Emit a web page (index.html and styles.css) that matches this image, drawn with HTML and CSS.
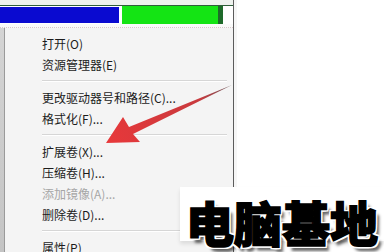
FILE: index.html
```html
<!DOCTYPE html>
<html>
<head>
<meta charset="utf-8">
<link rel="stylesheet" href="styles.css">
</head>
<body>
<div class="screen">
  <div class="disk">
    <div class="band"></div>
    <div class="bars">
      <div class="bar blue"></div>
      <div class="bar green"></div>
    </div>
    <div class="under"></div>
    <div class="body">
      <div class="strip"></div>
      <div class="menu">
        <div class="item">打开(O)</div>
        <div class="item">资源管理器(E)</div>
        <div class="sep"></div>
        <div class="item">更改驱动器号和路径(C)...</div>
        <div class="item">格式化(F)...</div>
        <div class="sep"></div>
        <div class="item">扩展卷(X)...</div>
        <div class="item">压缩卷(H)...</div>
        <div class="item disabled">添加镜像(A)...</div>
        <div class="item">删除卷(D)...</div>
        <div class="sep"></div>
        <div class="item">属性(P)</div>
      </div>
    </div>
  </div>
  <div class="divider"></div>
  <div class="blank"></div>
</div>
<svg class="arrow" width="384" height="252" viewBox="0 0 384 252">
  <defs>
    <linearGradient id="ag" x1="232" y1="86" x2="106" y2="143" gradientUnits="userSpaceOnUse">
      <stop offset="0" stop-color="#6a5a5e"/>
      <stop offset="0.25" stop-color="#c83a3e"/>
      <stop offset="1" stop-color="#e8383a"/>
    </linearGradient>
  </defs>
  <polygon points="106,143 123,117 129,127 232,85 133,134 140,142" fill="url(#ag)"/>
</svg>
<div class="mark">电脑基地</div>
</body>
</html>
```
FILE: styles.css
```css
html, body {
  margin: 0;
  padding: 0;
}
body {
  width: 384px;
  height: 252px;
  overflow: hidden;
  position: relative;
  background: #fff;
  font-family: "Noto Sans CJK SC", "Noto Sans", sans-serif;
}
.screen {
  display: flex;
  height: 252px;
}
.disk {
  width: 233px;
  display: flex;
  flex-direction: column;
  background: #f4f4f4;
  overflow: hidden;
}
.band {
  flex-shrink: 0;
  height: 5px;
  background: #eef2ee;
  border-bottom: 1px solid #2f5f3a;
}
.bars {
  flex-shrink: 0;
  display: flex;
  height: 18px;
  background: #fff;
}
.bar {
  height: 16px;
  margin-top: 1px;
}
.blue {
  width: 119px;
  background: #0a0ad0;
}
.green {
  width: 96px;
  margin-left: 3px;
  background: #14e414;
  border-right: 5px solid #1e6a2a;
  height: 18px;
  margin-top: 0;
}
.under {
  flex-shrink: 0;
  height: 3px;
  background: #fafafa;
  border-bottom: 1px dotted #d8c8cc;
}
.body {
  flex: 1;
  min-height: 0;
  display: flex;
}
.strip {
  width: 4px;
  background: linear-gradient(#d4d4d4, #c4c4c4);
}
.menu {
  flex: 1;
  border-left: 1px solid #9a9a9a;
  background: #f4f4f4;
  padding-top: 5px;
  padding-right: 6px;
}
.item {
  height: 21px;
  line-height: 21px;
  padding-left: 37px;
  font-size: 12px;
  color: #1c1c1c;
  white-space: nowrap;
}
.item.disabled {
  color: #a6a6a6;
}
.sep {
  height: 12px;
  margin-left: 37px;
  position: relative;
}
.sep::after {
  content: "";
  position: absolute;
  left: 0;
  right: 0;
  top: 5px;
  height: 1px;
  background: #d6d6d6;
  border-bottom: 1px solid #ffffff;
}
.divider {
  width: 1px;
  background: #5c5c5c;
}
.blank {
  flex: 1;
  background: #fff;
  border-left: 3px solid #f6f6f6;
}
.arrow {
  position: absolute;
  left: 0;
  top: 0;
}
.mark {
  position: absolute;
  left: 180px;
  top: 187px;
  width: 204px;
  height: 48px;
  padding-top: 6px;
  background: #fff;
  box-shadow: 0 3px 4px rgba(0,0,0,0.10);
  font-family: "Noto Sans CJK SC", sans-serif;
  font-weight: 900;
  font-size: 48px;
  line-height: 56px;
  text-align: center;
  color: #000;
  -webkit-text-stroke: 1.5px #000;
  text-shadow:
    2px 0 0 #fff, -2px 0 0 #fff, 0 2px 0 #fff, 0 -2px 0 #fff,
    2px 2px 0 #fff, -2px -2px 0 #fff, 2px -2px 0 #fff, -2px 2px 0 #fff,
    4px 5px 3px rgba(0,0,0,0.6);
}
```
